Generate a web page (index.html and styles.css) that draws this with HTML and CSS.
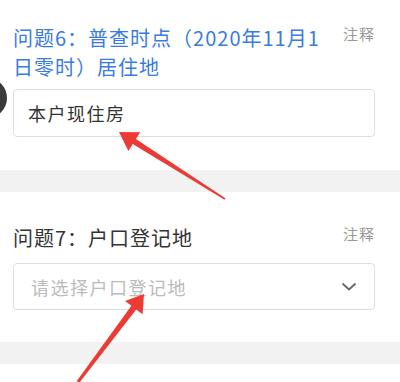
FILE: index.html
```html
<!DOCTYPE html>
<html lang="zh">
<head>
    <meta charset="UTF-8">
    <meta name="viewport" content="width=device-width, initial-scale=1.0">
    <title>问题</title>
    <link rel="stylesheet" href="styles.css">
</head>
<body>
<div class="page">
    <div class="question first">
        <div class="q-head">
            <div class="q-title active">问题6：普查时点（2020年11月1日零时）居住地</div>
            <div class="q-note">注释</div>
        </div>
        <div class="field">
            <span class="value">本户现住房</span>
        </div>
    </div>
    <div class="band"></div>
    <div class="question second">
        <div class="q-head">
            <div class="q-title">问题7：户口登记地</div>
            <div class="q-note">注释</div>
        </div>
        <div class="field select">
            <span class="placeholder">请选择户口登记地</span>
            <svg class="chevron" width="14" height="8" viewBox="0 0 14 8">
                <polyline points="1,1 7,6.5 13,1" fill="none" stroke="#666" stroke-width="1.8" stroke-linecap="round" stroke-linejoin="round"/>
            </svg>
        </div>
    </div>
    <div class="band"></div>

    <!-- floating button edge on the left -->
    <div class="float-btn"></div>

    <!-- red annotation arrows -->
    <svg class="arrows" width="400" height="382" viewBox="0 0 400 382">
        <polygon fill="#ee3a35" points="119,132 140.2,132.3 135.9,139.1 225.4,198.3 224.6,199.7 132.7,144.1 128.4,150.9"/>
        <polygon fill="#ee3a35" points="144,294 142.6,314.2 136.2,309.4 79.2,382.9 76.8,381.1 131.4,305.8 125,301"/>
    </svg>
</div>
</body>
</html>
```
FILE: styles.css
```css
body {
    margin: 0;
    font-family: "Noto Sans CJK SC", "Noto Sans", sans-serif;
    background: #fff;
}
.page {
    position: relative;
    width: 400px;
    height: 382px;
    overflow: hidden;
}
.question {
    padding: 0 25px 0 13px;
}
.question.first {
    padding-top: 23px;
    padding-bottom: 33px;
}
.question.second {
    padding-top: 31px;
    padding-bottom: 32px;
}
.q-head {
    display: flex;
    align-items: flex-start;
}
.q-title {
    flex: 1;
    font-size: 20px;
    line-height: 29px;
    letter-spacing: 1px;
    color: #333;
}
.q-title.active {
    color: #3a7be0;
}
.q-note {
    margin-left: 15px;
    font-size: 15px;
    line-height: 22px;
    letter-spacing: 1px;
    color: #999;
}
.field {
    display: flex;
    align-items: center;
    box-sizing: border-box;
    height: 48px;
    margin-top: 8px;
    padding: 0 14px;
    border: 1px solid #dedede;
    border-radius: 4px;
    font-size: 18px;
    letter-spacing: 1.5px;
}
.field.select {
    height: 47px;
    margin-top: 11px;
    padding: 0 18px 0 17px;
    justify-content: space-between;
}
.value {
    color: #333;
}
.placeholder {
    color: #bbb;
}
.band {
    height: 22px;
    background: #f2f2f2;
}
.float-btn {
    position: absolute;
    left: -33px;
    top: 78px;
    width: 40px;
    height: 40px;
    border-radius: 50%;
    background: #3b3b3b;
}
.arrows {
    position: absolute;
    left: 0;
    top: 0;
}
```
